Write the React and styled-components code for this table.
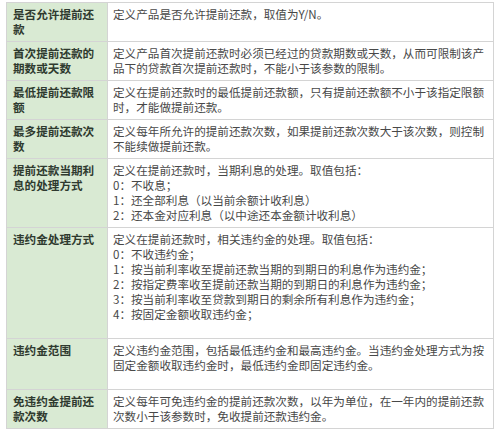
import styled, { createGlobalStyle } from "styled-components"

const GlobalStyle = createGlobalStyle`
  html, body {
    margin: 0;
    padding: 0;
    background: #ffffff;
  }
  body {
    font-family: "Noto Sans CJK SC", "Liberation Sans", sans-serif;
  }
`

// line breaks follow the source table
const rows = [
  {
    label: ["是否允许提前还", "款"],
    lines: ["定义产品是否允许提前还款，取值为Y/N。"],
  },
  {
    label: ["首次提前还款的", "期数或天数"],
    lines: [
      "定义产品首次提前还款时必须已经过的贷款期数或天数，从而可限制该产",
      "品下的贷款首次提前还款时，不能小于该参数的限制。",
    ],
  },
  {
    label: ["最低提前还款限", "额"],
    lines: [
      "定义在提前还款时的最低提前还款额，只有提前还款额不小于该指定限额",
      "时，才能做提前还款。",
    ],
  },
  {
    label: ["最多提前还款次", "数"],
    lines: [
      "定义每年所允许的提前还款次数，如果提前还款次数大于该次数，则控制",
      "不能续做提前还款。",
    ],
  },
  {
    label: ["提前还款当期利", "息的处理方式"],
    lines: [
      "定义在提前还款时，当期利息的处理。取值包括：",
      "0：不收息；",
      "1：还全部利息（以当前余额计收利息）",
      "2：还本金对应利息（以中途还本金额计收利息）",
    ],
  },
  {
    label: ["违约金处理方式"],
    extra: 12,
    lines: [
      "定义在提前还款时，相关违约金的处理。取值包括：",
      "0：不收违约金；",
      "1：按当前利率收至提前还款当期的到期日的利息作为违约金；",
      "2：按指定费率收至提前还款当期的到期日的利息作为违约金；",
      "3：按当前利率收至贷款到期日的剩余所有利息作为违约金；",
      "4：按固定金额收取违约金；",
    ],
  },
  {
    label: ["违约金范围"],
    extra: 12,
    lines: [
      "定义违约金范围，包括最低违约金和最高违约金。当违约金处理方式为按",
      "固定金额收取违约金时，最低违约金即固定违约金。",
    ],
  },
  {
    label: ["免违约金提前还", "款次数"],
    lines: [
      "定义每年可免违约金的提前还款次数，以年为单位，在一年内的提前还款",
      "次数小于该参数时，免收提前还款违约金。",
    ],
  },
]

export default function App() {
  return (
    <Page lang="zh-CN">
      <GlobalStyle />
      <Table>
        {rows.map((row, idx) => (
          <Row key={idx}>
            <Label>
              {row.label.map((t, i) => (
                <Line key={i}>{t}</Line>
              ))}
            </Label>
            <Desc $extra={row.extra || 0}>
              {row.lines.map((line, i) => (
                <Line key={i}>{line}</Line>
              ))}
            </Desc>
          </Row>
        ))}
      </Table>
    </Page>
  )
}

const Page = styled.div`
  padding: 2px 0 0 6px;
`

const Table = styled.div`
  width: 488px;
  display: flex;
  flex-direction: column;
  border-top: 1px solid #d4d4d4;
  border-left: 1px solid #d4d4d4;
  box-sizing: border-box;
`

const Row = styled.div`
  display: grid;
  grid-template-columns: 101px 386px;
  font-family: "Noto Sans CJK SC", "Liberation Sans", sans-serif;
  font-size: 11.6px;
  line-height: 15px;
`

const Label = styled.div`
  background: #d9ead3;
  color: #2f3a2f;
  font-weight: bold;
  padding: 4px 4px 4px 6px;
  border-right: 1px solid #d4d4d4;
  border-bottom: 1px solid #d4d4d4;
`

const Desc = styled.div`
  color: #484848;
  padding: 4px 2px ${({ $extra }) => 4 + $extra}px 5px;
  border-right: 1px solid #d4d4d4;
  border-bottom: 1px solid #d4d4d4;
`

const Line = styled.div`
  white-space: nowrap;
`
